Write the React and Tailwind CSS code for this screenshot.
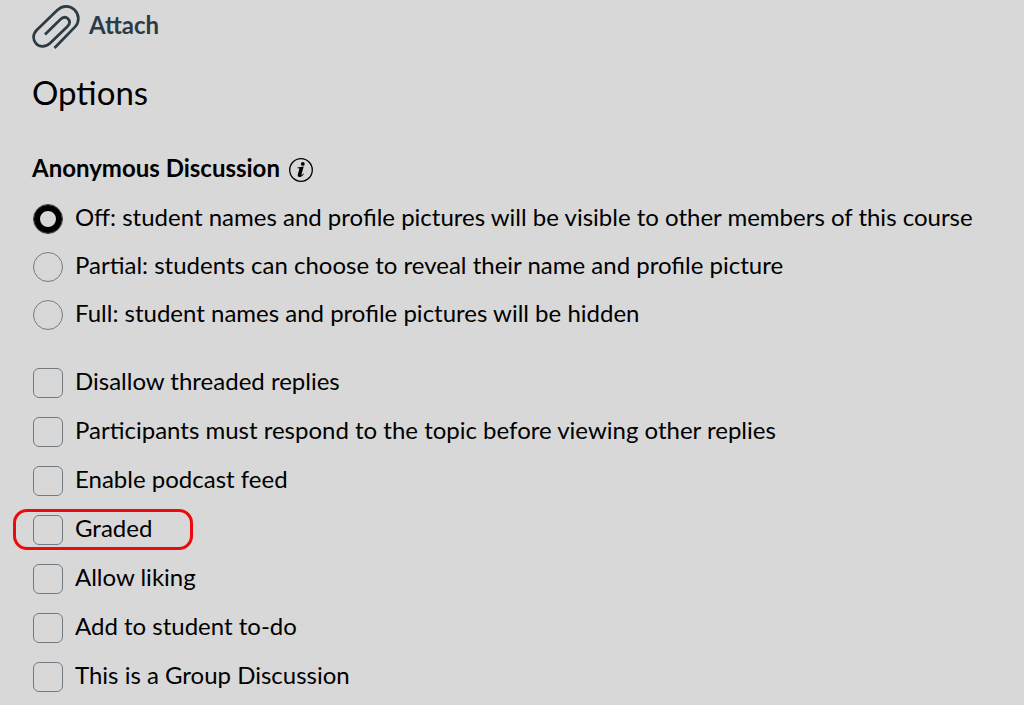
import React from 'react';

const visibilityOptions = [
  { id: 'off', label: 'Off: student names and profile pictures will be visible to other members of this course' },
  { id: 'partial', label: 'Partial: students can choose to reveal their name and profile picture' },
  { id: 'full', label: 'Full: student names and profile pictures will be hidden' },
];

const settings = [
  { id: 'threaded', label: 'Disallow threaded replies' },
  { id: 'respond', label: 'Participants must respond to the topic before viewing other replies' },
  { id: 'podcast', label: 'Enable podcast feed' },
  { id: 'graded', label: 'Graded', highlighted: true },
  { id: 'liking', label: 'Allow liking' },
  { id: 'todo', label: 'Add to student to-do' },
  { id: 'group', label: 'This is a Group Discussion' },
];

function PaperclipIcon() {
  return (
    <svg width="49" height="44" viewBox="0 0 49 44" fill="none" stroke="#2d3b45" strokeWidth="2.7" aria-hidden="true">
      <path d="M13 29.5 L28 14.8 C31 11.8 34 11.8 36 13.8 C38.3 16.1 38 19 35.2 21.8 L18 38.3 C13.5 42.5 7.5 42.3 4.2 38.8 C0.5 34.8 0.6 29.2 4.8 25 L25.2 5.2 C30.5 0.2 37.8 0.2 42.5 4.8 C47.5 9.8 47.5 17 43 21.8 L22.5 43" />
    </svg>
  );
}

function InfoIcon() {
  return (
    <svg width="24" height="24" viewBox="0 0 24 24" aria-hidden="true">
      <circle cx="12" cy="12" r="11.3" fill="none" stroke="#000" strokeWidth="1.3" />
      <circle cx="13.8" cy="5.9" r="1.9" />
      <path d="M8.4 9.4 L14.7 8.5 L12.5 16.4 C12.3 17.6 13 17.2 14.2 15.4 L14.9 15.9 C12.8 19.6 7.9 20.2 8.8 16.5 L10.4 11 C10.6 10.2 10 10.1 8.4 10.2 Z" />
    </svg>
  );
}

export default function App() {
  return (
    <main className="min-h-screen bg-[#d8d8d8] px-8 pt-[5px] font-['Lato',sans-serif] text-2xl text-black">
      <button type="button" className="flex h-11 items-center gap-2 font-bold text-[#2d3b45]">
        <PaperclipIcon />
        <span className="pb-1">Attach</span>
      </button>

      <h1 className="mt-[23px] text-[33px] leading-10">Options</h1>

      <fieldset className="mt-[33px]">
        <legend className="flex h-[50px] items-center gap-[9px] font-bold">
          <span className="pb-1">Anonymous Discussion</span>
          <button type="button" aria-label="About anonymous discussions">
            <InfoIcon />
          </button>
        </legend>
        {visibilityOptions.map((option) => (
          <label key={option.id} className="flex h-12 items-center gap-3">
            <input
              type="radio"
              name="visibility"
              defaultChecked={option.id === 'off'}
              className="ml-px size-[30px] shrink-0 appearance-none rounded-full border border-[#737b82] checked:border-[#333333] checked:inset-ring-6 checked:inset-ring-black"
            />
            <span className="pb-1">{option.label}</span>
          </label>
        ))}
      </fieldset>

      <div className="mt-[19px]">
        {settings.map((setting) => (
          <label key={setting.id} className="relative flex h-[49px] w-fit items-center gap-3">
            <input
              type="checkbox"
              className="ml-px size-[30px] shrink-0 appearance-none rounded-md border border-[#737b82] checked:bg-black"
            />
            <span className="pb-1">{setting.label}</span>
            {setting.highlighted && (
              <span className="pointer-events-none absolute -left-[19px] -right-[41px] inset-y-1 rounded-[14px] border-3 border-[#ec0a0c]" />
            )}
          </label>
        ))}
      </div>
    </main>
  );
}
